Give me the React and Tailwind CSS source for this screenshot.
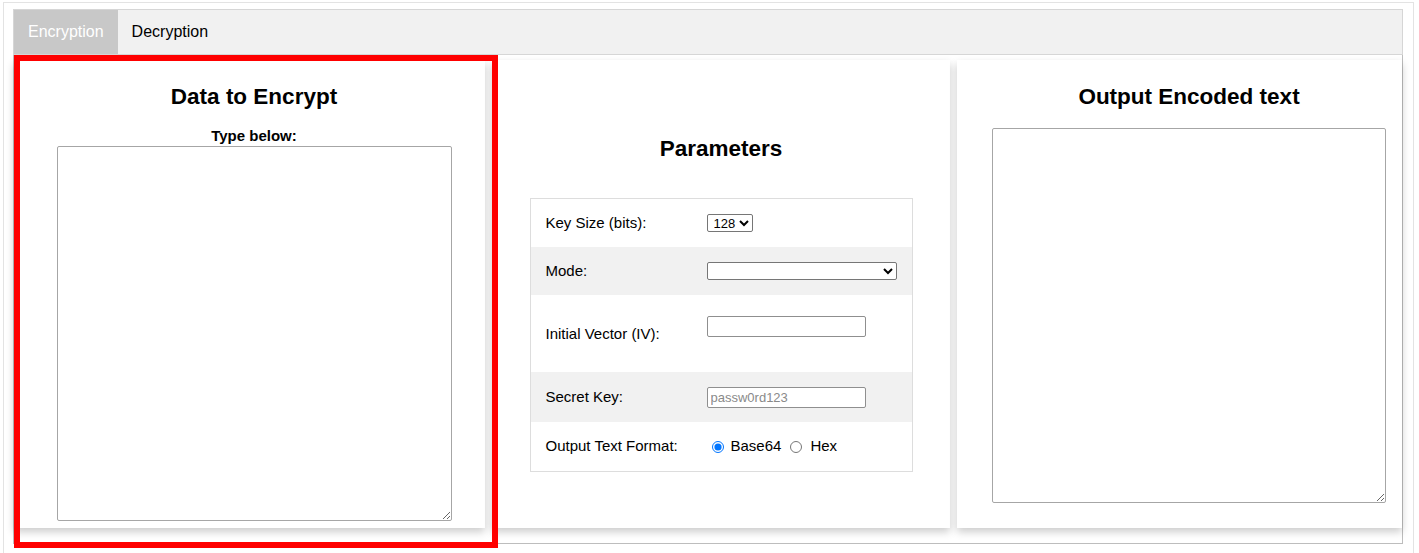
import React, { useState } from "react";

const Card = ({ className, children }) => (
  <div
    className={
      "bg-white shadow-[0_4px_8px_0_rgba(0,0,0,0.2)] flex flex-col items-center " +
      className
    }
  >
    {children}
  </div>
);

const App = () => {
  let [tab, setTab] = useState("enc");
  let [format, setFormat] = useState("base64");

  return (
    <div className="relative h-[553px] w-[1419px] overflow-hidden bg-white font-['Liberation_Sans',Arial,sans-serif] text-[15px] text-black">
      {/* outer frame */}
      <div className="ml-[3px] mt-[2px] h-[560px] w-[1411px] border-l border-r border-t border-[#e3e3e3] pl-[9px] pr-[10px] pt-[6px]">
        {/* tab bar */}
        <div className="flex h-[46px] border border-[#d6d6d6] bg-[#f1f1f1] text-[16px]">
          <button
            onClick={() => setTab("enc")}
            className={
              tab == "enc"
                ? "bg-[#c8c8c8] px-[14px] text-white"
                : "px-[14px] text-black"
            }
          >
            Encryption
          </button>
          <button
            onClick={() => setTab("dec")}
            className={
              tab == "dec"
                ? "bg-[#c8c8c8] px-[14px] text-white"
                : "px-[14px] text-black"
            }
          >
            Decryption
          </button>
        </div>

        {/* panel */}
        <div className="flex gap-[7px] border-x border-b border-[#bdbdbd] pb-[15px] pt-[5px]">
          {/* Data to encrypt */}
          <Card className="h-[468px] w-[471px] pl-[9px]">
            <h2 className="mt-[23px] text-[22.5px] font-bold leading-[28px]">
              Data to Encrypt
            </h2>
            <label className="mt-[16px] text-[15px] font-bold leading-[17px]">
              Type below:
            </label>
            <textarea className="mt-[2px] h-[375px] w-[395px] resize rounded-[2px] border border-[#a6a6a6] bg-white" />
          </Card>

          {/* Parameters */}
          <Card className="h-[468px] w-[458px]">
            <h2 className="mt-[75px] text-[22.5px] font-bold leading-[28px]">
              Parameters
            </h2>
            <div className="mt-[35px] w-[383px] border border-[#dddddd] text-[15px]">
              <div className="flex h-[48px] items-center">
                <div className="w-[160px] pl-[15px]">Key Size (bits):</div>
                <select className="ml-[16px] h-[18px] rounded-[2px] border border-[#767676] pl-[2px] text-[13px] leading-none">
                  <option>128</option>
                  <option>192</option>
                  <option>256</option>
                </select>
              </div>
              <div className="flex h-[48px] items-center bg-[#f1f1f1]">
                <div className="w-[160px] pl-[15px]">Mode:</div>
                <select className="ml-[16px] h-[18px] w-[190px] rounded-[2px] border border-[#767676] bg-white text-[13px] leading-none">
                  <option></option>
                  <option>CBC</option>
                  <option>ECB</option>
                </select>
              </div>
              <div className="flex h-[77px]">
                <div className="flex w-[160px] items-center pl-[15px] pt-[1px]">
                  Initial Vector (IV):
                </div>
                <div className="ml-[16px] pt-[20px]">
                  <input
                    type="text"
                    className="h-[21px] w-[159px] rounded-[2px] border border-[#8f8f8f] bg-white px-[3px] text-[13px]"
                  />
                </div>
              </div>
              <div className="flex h-[50px] items-center bg-[#f1f1f1]">
                <div className="w-[160px] pl-[15px]">Secret Key:</div>
                <input
                  type="text"
                  placeholder="passw0rd123"
                  className="ml-[16px] h-[21px] w-[159px] rounded-[2px] border border-[#8f8f8f] bg-white px-[3px] text-[13px] placeholder:text-[#8a8a8a]"
                />
              </div>
              <div className="flex h-[49px] items-center">
                <div className="w-[160px] pl-[15px]">Output Text Format:</div>
                <label className="ml-[21px] flex items-center">
                  <input
                    type="radio"
                    name="fmt"
                    checked={format == "base64"}
                    onChange={() => setFormat("base64")}
                    className="m-0 h-[12px] w-[12px] accent-[#0075ff]"
                  />
                  <span className="ml-[7px]">Base64</span>
                </label>
                <label className="ml-[9px] flex items-center">
                  <input
                    type="radio"
                    name="fmt"
                    checked={format == "hex"}
                    onChange={() => setFormat("hex")}
                    className="m-0 h-[12px] w-[12px]"
                  />
                  <span className="ml-[8px]">Hex</span>
                </label>
              </div>
            </div>
          </Card>

          {/* Output */}
          <Card className="h-[468px] flex-1 pl-[19px]">
            <h2 className="mt-[23px] text-[22.5px] font-bold leading-[28px]">
              Output Encoded text
            </h2>
            <textarea className="mt-[17px] h-[375px] w-[394px] resize rounded-[2px] border border-[#a6a6a6] bg-white" />
          </Card>
        </div>
      </div>

      {/* red highlight box */}
      <div className="pointer-events-none absolute left-[14px] top-[55px] h-[493px] w-[484px] border-[6px] border-[#ff0000]" />
    </div>
  );
};

export default App;
